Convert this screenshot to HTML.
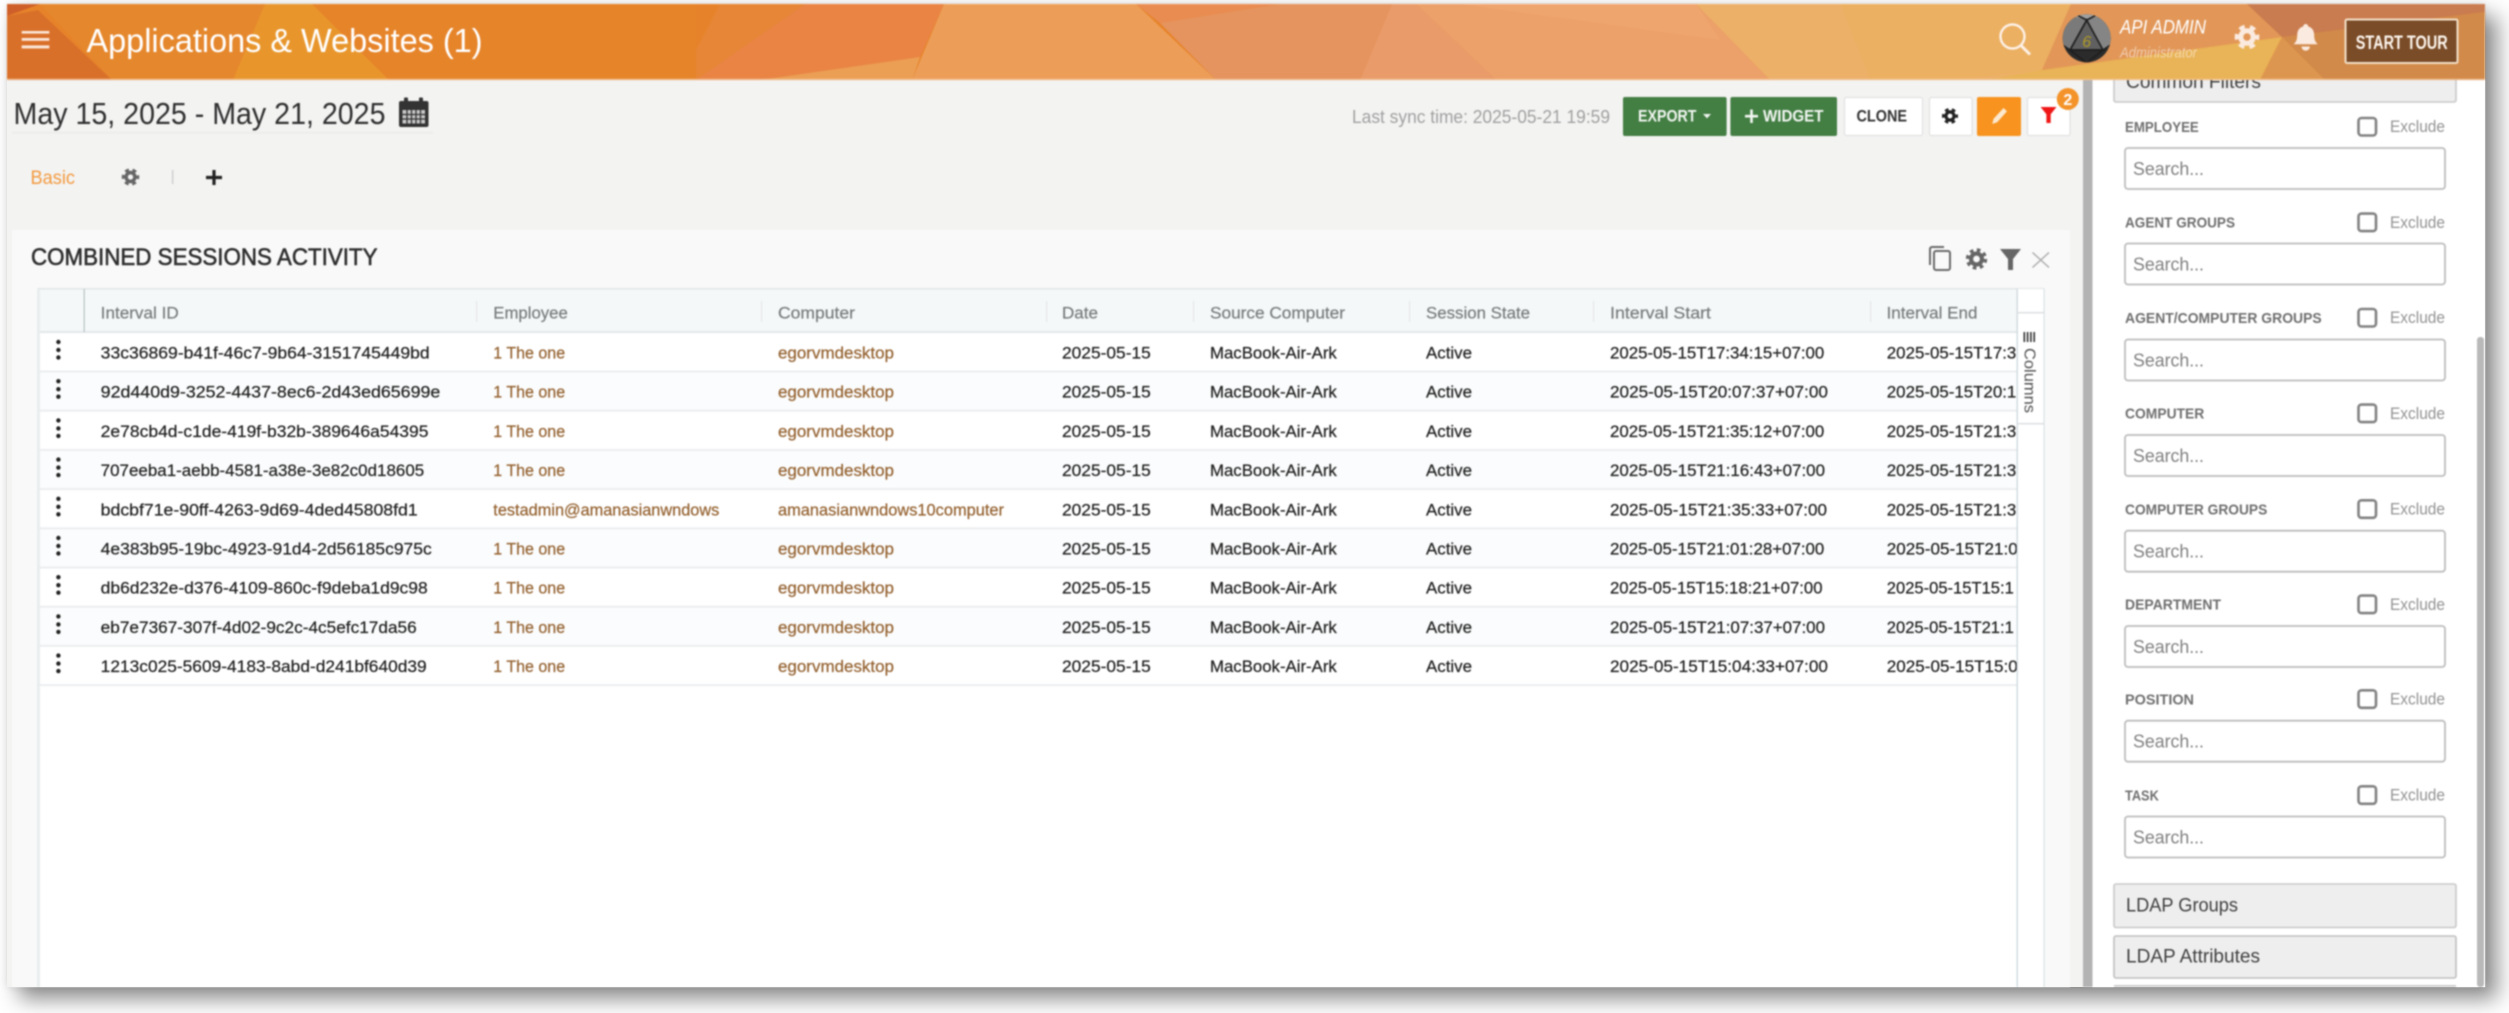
<!DOCTYPE html>
<html lang="en"><head><meta charset="utf-8"><title>Applications &amp; Websites</title>
<style>
html,body{margin:0;padding:0;background:#fff;width:2509px;height:1013px;overflow:hidden}
#p{position:absolute;left:7px;top:4px;width:2478px;height:983px;background:#f3f3f2;box-shadow:12px 12px 20px rgba(0,0,0,.45),0 0 8px rgba(0,0,0,.1)}
svg{position:absolute;left:0;top:0;filter:blur(.7px)}
text{font-family:"Liberation Sans",sans-serif}
.h{font-size:16.5px;fill:#777b7b;stroke:#777b7b;stroke-width:.2}
.c{font-size:16.5px;fill:#1f1f1f;stroke:#1f1f1f;stroke-width:.22}
.l{font-size:16.5px;fill:#93602e;stroke:#93602e;stroke-width:.2}
.sl{font-size:15px;font-weight:700;fill:#6f6f6f}
.ex{font-size:16.5px;fill:#939393}
.se{font-size:18.5px;fill:#808080}
.pn{font-size:19.5px;fill:#404040}
.in{fill:#fff;stroke:#bdbdbd;stroke-width:1.8}
.cb{fill:#fff;stroke:#828282;stroke-width:2.6}
</style></head><body>
<div id="p"></div>
<svg width="2509" height="1013" viewBox="0 0 2509 1013" xmlns="http://www.w3.org/2000/svg">
<defs>
<g id="k" fill="#222"><circle cx="58.4" cy="0" r="2.2"/><circle cx="58.4" cy="8" r="2.2"/><circle cx="58.4" cy="15.5" r="2.2"/></g>
<g id="g8"><circle r="8.5" fill="none" stroke="currentColor" stroke-width="3.4" stroke-dasharray="3.4 3.28"/><circle r="5.2" fill="none" stroke="currentColor" stroke-width="4"/></g>
<g id="g6"><circle r="8.5" fill="none" stroke="currentColor" stroke-width="3.6" stroke-dasharray="4.6 4.3" stroke-dashoffset="2.3"/><circle r="5.2" fill="none" stroke="currentColor" stroke-width="4.2"/></g>
<clipPath id="av"><circle cx="2086.7" cy="38.3" r="24"/></clipPath>
</defs>

<!-- main card -->
<rect x="12" y="230" width="2058" height="757" fill="#f9f9f9"/>
<rect x="12" y="132" width="421" height="1.6" fill="#ebebea"/>

<!-- date row -->
<text x="13.500" y="124" font-size="31" fill="#2f2f2f" textLength="372" lengthAdjust="spacingAndGlyphs">May 15, 2025 - May 21, 2025</text>
<g fill="#333"><rect x="399" y="101" width="29.5" height="26" rx="2"/><rect x="404" y="97.5" width="4" height="6" rx="1"/><rect x="419" y="97.5" width="4" height="6" rx="1"/></g>
<g fill="#c9c9c9"><rect x="402.5" y="110" width="22.5" height="13.5"/></g>
<g stroke="#333" stroke-width="1.3"><path d="M407 110v14M411.5 110v14M416 110v14M420.5 110v14M402 114.5h23M402 119h23"/></g>

<!-- tabs -->
<text x="30.500" y="184" font-size="19.500" fill="#f39a3f" textLength="44.500" lengthAdjust="spacingAndGlyphs">Basic</text>
<use href="#g6" transform="translate(130.5,177) scale(.85)" color="#666"/>
<rect x="172" y="170" width="1.4" height="14" fill="#ccc"/>
<path d="M214 170v15M206 177.5h16" stroke="#222" stroke-width="3.2" fill="none"/>

<!-- sync + buttons -->
<text x="1352" y="123" font-size="18" fill="#a0a0a0" textLength="258" lengthAdjust="spacingAndGlyphs">Last sync time: 2025-05-21 19:59</text>
<rect x="1623" y="97" width="103.6" height="39" rx="2" fill="#437e43"/>
<text x="1638" y="121.7" font-size="17" font-weight="700" fill="#f2f6f2" textLength="58.5" lengthAdjust="spacingAndGlyphs">EXPORT</text>
<path d="M1703 114h8l-4 4.4z" fill="#f2f6f2"/>
<rect x="1730.4" y="97" width="106.6" height="39" rx="2" fill="#437e43"/>
<path d="M1751.5 109.5v13.5M1745 116.2h13" stroke="#f2f6f2" stroke-width="2.6"/>
<text x="1763" y="121.7" font-size="17" font-weight="700" fill="#f2f6f2" textLength="60.5" lengthAdjust="spacingAndGlyphs">WIDGET</text>
<rect x="1844.5" y="97.5" width="78" height="38" rx="2" fill="#fff" stroke="#dcdcdc"/>
<text x="1856.5" y="121.7" font-size="17" font-weight="700" fill="#333" textLength="50.5" lengthAdjust="spacingAndGlyphs">CLONE</text>
<rect x="1929.5" y="97.5" width="42.5" height="38" rx="2" fill="#fff" stroke="#dcdcdc"/>
<use href="#g6" transform="translate(1950,116) scale(.78)" color="#222"/>
<rect x="1977" y="97" width="44" height="39" rx="2" fill="#f7931e"/>
<path d="M2003.5 108l3.5 3.2-9.8 11-5 1.8 1.4-5.2z" fill="#fde9cf"/>
<rect x="2027.5" y="97.5" width="42.5" height="38" rx="2" fill="#fff" stroke="#dcdcdc"/>
<path d="M2040.6 107h15.9l-5.8 7.2v8.8h-4.3v-8.8z" fill="#f01616"/>
<circle cx="2067.8" cy="99" r="11" fill="#f4932a"/>
<text x="2067.8" y="105" font-size="16" font-weight="700" fill="#fff" text-anchor="middle">2</text>

<!-- card title -->
<text x="31" y="265" font-size="24" fill="#2f2f2f" stroke="#2f2f2f" stroke-width=".6" textLength="346.500" lengthAdjust="spacingAndGlyphs">COMBINED SESSIONS ACTIVITY</text>
<g fill="none" stroke="#6a6a6a" stroke-width="2"><rect x="1934" y="251" width="16" height="19" rx="2"/><path d="M1930 265v-16a2 2 0 0 1 2-2h12"/></g>
<use href="#g8" transform="translate(1976.5,259) scale(1.05)" color="#666"/>
<path d="M2000 249h21l-8 10v11h-5v-11z" fill="#666"/>
<path d="M2032.5 252.5l16.5 15M2049 252.5l-16.5 15" stroke="#adadad" stroke-width="1.5"/>

<!-- table -->
<rect x="38.5" y="289" width="2005.5" height="698" fill="#fff"/>
<rect x="37" y="288" width="3" height="699" fill="#e9eded"/>
<rect x="38.5" y="288" width="2006" height="1.6" fill="#e2e6e7"/>
<rect x="40" y="289.5" width="1977" height="42.5" fill="#f5f8f8"/>
<rect x="40" y="331" width="1977" height="2" fill="#e3e7e9"/>
<rect x="83.6" y="289" width="1.2" height="43" fill="#b6c0c2"/>
<g fill="#e4e7e8"><rect x="476" y="301" width="1.2" height="21"/><rect x="761" y="301" width="1.2" height="21"/><rect x="1046" y="301" width="1.2" height="21"/><rect x="1193" y="301" width="1.2" height="21"/><rect x="1409" y="301" width="1.2" height="21"/><rect x="1593" y="301" width="1.2" height="21"/><rect x="1870" y="301" width="1.2" height="21"/></g>
<g fill="#fbfcfd"><rect x="40" y="372" width="1977" height="38"/><rect x="40" y="450.4" width="1977" height="38"/><rect x="40" y="528.8" width="1977" height="38"/><rect x="40" y="607.2" width="1977" height="38"/></g>
<g fill="#e9ecee"><rect x="40" y="370.6" width="1977" height="1.8"/><rect x="40" y="409.8" width="1977" height="1.8"/><rect x="40" y="449" width="1977" height="1.8"/><rect x="40" y="488.2" width="1977" height="1.8"/><rect x="40" y="527.4" width="1977" height="1.8"/><rect x="40" y="566.6" width="1977" height="1.8"/><rect x="40" y="605.8" width="1977" height="1.8"/><rect x="40" y="645" width="1977" height="1.8"/><rect x="40" y="684.2" width="1977" height="1.8"/></g>

<g class="hd">
<text class="h" x="100.7" y="318.5" textLength="78" lengthAdjust="spacingAndGlyphs">Interval ID</text>
<text class="h" x="493.3" y="318.5" textLength="74.5" lengthAdjust="spacingAndGlyphs">Employee</text>
<text class="h" x="778" y="318.5" textLength="77" lengthAdjust="spacingAndGlyphs">Computer</text>
<text class="h" x="1062" y="318.5" textLength="36" lengthAdjust="spacingAndGlyphs">Date</text>
<text class="h" x="1210" y="318.5" textLength="135" lengthAdjust="spacingAndGlyphs">Source Computer</text>
<text class="h" x="1426" y="318.5" textLength="104" lengthAdjust="spacingAndGlyphs">Session State</text>
<text class="h" x="1610" y="318.5" textLength="101" lengthAdjust="spacingAndGlyphs">Interval Start</text>
<text class="h" x="1886.5" y="318.5" textLength="91" lengthAdjust="spacingAndGlyphs">Interval End</text>
</g>

<use href="#k" y="342"/><use href="#k" y="381.2"/><use href="#k" y="420.4"/><use href="#k" y="459.6"/><use href="#k" y="498.8"/><use href="#k" y="538"/><use href="#k" y="577.2"/><use href="#k" y="616.4"/><use href="#k" y="655.6"/>

<!-- row 1 -->
<text class="c" x="100.7" y="358.5" textLength="329" lengthAdjust="spacingAndGlyphs">33c36869-b41f-46c7-9b64-3151745449bd</text>
<text class="l" x="493.3" y="358.5" textLength="71.8" lengthAdjust="spacingAndGlyphs">1 The one</text>
<text class="l" x="778" y="358.5" textLength="116" lengthAdjust="spacingAndGlyphs">egorvmdesktop</text>
<text class="c" x="1062" y="358.5" textLength="88.8" lengthAdjust="spacingAndGlyphs">2025-05-15</text>
<text class="c" x="1210" y="358.5" textLength="126.8" lengthAdjust="spacingAndGlyphs">MacBook-Air-Ark</text>
<text class="c" x="1426" y="358.5" textLength="46" lengthAdjust="spacingAndGlyphs">Active</text>
<text class="c" x="1610" y="358.5" textLength="214.3" lengthAdjust="spacingAndGlyphs">2025-05-15T17:34:15+07:00</text>
<text class="c" x="1886.8" y="358.5" textLength="129.5" lengthAdjust="spacingAndGlyphs">2025-05-15T17:3</text>
<!-- row 2 -->
<text class="c" x="100.7" y="397.7" textLength="339.6" lengthAdjust="spacingAndGlyphs">92d440d9-3252-4437-8ec6-2d43ed65699e</text>
<text class="l" x="493.3" y="397.7" textLength="71.8" lengthAdjust="spacingAndGlyphs">1 The one</text>
<text class="l" x="778" y="397.7" textLength="116" lengthAdjust="spacingAndGlyphs">egorvmdesktop</text>
<text class="c" x="1062" y="397.7" textLength="88.8" lengthAdjust="spacingAndGlyphs">2025-05-15</text>
<text class="c" x="1210" y="397.7" textLength="126.8" lengthAdjust="spacingAndGlyphs">MacBook-Air-Ark</text>
<text class="c" x="1426" y="397.7" textLength="46" lengthAdjust="spacingAndGlyphs">Active</text>
<text class="c" x="1610" y="397.7" textLength="217.9" lengthAdjust="spacingAndGlyphs">2025-05-15T20:07:37+07:00</text>
<text class="c" x="1886.8" y="397.7" textLength="129.5" lengthAdjust="spacingAndGlyphs">2025-05-15T20:1</text>
<!-- row 3 -->
<text class="c" x="100.7" y="436.9" textLength="327.8" lengthAdjust="spacingAndGlyphs">2e78cb4d-c1de-419f-b32b-389646a54395</text>
<text class="l" x="493.3" y="436.9" textLength="71.8" lengthAdjust="spacingAndGlyphs">1 The one</text>
<text class="l" x="778" y="436.9" textLength="116" lengthAdjust="spacingAndGlyphs">egorvmdesktop</text>
<text class="c" x="1062" y="436.9" textLength="88.8" lengthAdjust="spacingAndGlyphs">2025-05-15</text>
<text class="c" x="1210" y="436.9" textLength="126.8" lengthAdjust="spacingAndGlyphs">MacBook-Air-Ark</text>
<text class="c" x="1426" y="436.9" textLength="46" lengthAdjust="spacingAndGlyphs">Active</text>
<text class="c" x="1610" y="436.9" textLength="214.3" lengthAdjust="spacingAndGlyphs">2025-05-15T21:35:12+07:00</text>
<text class="c" x="1886.8" y="436.9" textLength="129.5" lengthAdjust="spacingAndGlyphs">2025-05-15T21:3</text>
<!-- row 4 -->
<text class="c" x="100.7" y="476.1" textLength="323.5" lengthAdjust="spacingAndGlyphs">707eeba1-aebb-4581-a38e-3e82c0d18605</text>
<text class="l" x="493.3" y="476.1" textLength="71.8" lengthAdjust="spacingAndGlyphs">1 The one</text>
<text class="l" x="778" y="476.1" textLength="116" lengthAdjust="spacingAndGlyphs">egorvmdesktop</text>
<text class="c" x="1062" y="476.1" textLength="88.8" lengthAdjust="spacingAndGlyphs">2025-05-15</text>
<text class="c" x="1210" y="476.1" textLength="126.8" lengthAdjust="spacingAndGlyphs">MacBook-Air-Ark</text>
<text class="c" x="1426" y="476.1" textLength="46" lengthAdjust="spacingAndGlyphs">Active</text>
<text class="c" x="1610" y="476.1" textLength="215" lengthAdjust="spacingAndGlyphs">2025-05-15T21:16:43+07:00</text>
<text class="c" x="1886.8" y="476.1" textLength="129.5" lengthAdjust="spacingAndGlyphs">2025-05-15T21:3</text>
<!-- row 5 -->
<text class="c" x="100.7" y="515.3" textLength="317" lengthAdjust="spacingAndGlyphs">bdcbf71e-90ff-4263-9d69-4ded45808fd1</text>
<text class="l" x="493.3" y="515.3" textLength="226" lengthAdjust="spacingAndGlyphs">testadmin@amanasianwndows</text>
<text class="l" x="778" y="515.3" textLength="226" lengthAdjust="spacingAndGlyphs">amanasianwndows10computer</text>
<text class="c" x="1062" y="515.3" textLength="88.8" lengthAdjust="spacingAndGlyphs">2025-05-15</text>
<text class="c" x="1210" y="515.3" textLength="126.8" lengthAdjust="spacingAndGlyphs">MacBook-Air-Ark</text>
<text class="c" x="1426" y="515.3" textLength="46" lengthAdjust="spacingAndGlyphs">Active</text>
<text class="c" x="1610" y="515.3" textLength="217" lengthAdjust="spacingAndGlyphs">2025-05-15T21:35:33+07:00</text>
<text class="c" x="1886.8" y="515.3" textLength="129.5" lengthAdjust="spacingAndGlyphs">2025-05-15T21:3</text>
<!-- row 6 -->
<text class="c" x="100.7" y="554.5" textLength="331" lengthAdjust="spacingAndGlyphs">4e383b95-19bc-4923-91d4-2d56185c975c</text>
<text class="l" x="493.3" y="554.5" textLength="71.8" lengthAdjust="spacingAndGlyphs">1 The one</text>
<text class="l" x="778" y="554.5" textLength="116" lengthAdjust="spacingAndGlyphs">egorvmdesktop</text>
<text class="c" x="1062" y="554.5" textLength="88.8" lengthAdjust="spacingAndGlyphs">2025-05-15</text>
<text class="c" x="1210" y="554.5" textLength="126.8" lengthAdjust="spacingAndGlyphs">MacBook-Air-Ark</text>
<text class="c" x="1426" y="554.5" textLength="46" lengthAdjust="spacingAndGlyphs">Active</text>
<text class="c" x="1610" y="554.5" textLength="214.3" lengthAdjust="spacingAndGlyphs">2025-05-15T21:01:28+07:00</text>
<text class="c" x="1886.8" y="554.5" textLength="131" lengthAdjust="spacingAndGlyphs">2025-05-15T21:0</text>
<!-- row 7 -->
<text class="c" x="100.7" y="593.7" textLength="327" lengthAdjust="spacingAndGlyphs">db6d232e-d376-4109-860c-f9deba1d9c98</text>
<text class="l" x="493.3" y="593.7" textLength="71.8" lengthAdjust="spacingAndGlyphs">1 The one</text>
<text class="l" x="778" y="593.7" textLength="116" lengthAdjust="spacingAndGlyphs">egorvmdesktop</text>
<text class="c" x="1062" y="593.7" textLength="88.8" lengthAdjust="spacingAndGlyphs">2025-05-15</text>
<text class="c" x="1210" y="593.7" textLength="126.8" lengthAdjust="spacingAndGlyphs">MacBook-Air-Ark</text>
<text class="c" x="1426" y="593.7" textLength="46" lengthAdjust="spacingAndGlyphs">Active</text>
<text class="c" x="1610" y="593.7" textLength="212.5" lengthAdjust="spacingAndGlyphs">2025-05-15T15:18:21+07:00</text>
<text class="c" x="1886.8" y="593.7" textLength="127" lengthAdjust="spacingAndGlyphs">2025-05-15T15:1</text>
<!-- row 8 -->
<text class="c" x="100.7" y="632.9" textLength="316" lengthAdjust="spacingAndGlyphs">eb7e7367-307f-4d02-9c2c-4c5efc17da56</text>
<text class="l" x="493.3" y="632.9" textLength="71.8" lengthAdjust="spacingAndGlyphs">1 The one</text>
<text class="l" x="778" y="632.9" textLength="116" lengthAdjust="spacingAndGlyphs">egorvmdesktop</text>
<text class="c" x="1062" y="632.9" textLength="88.8" lengthAdjust="spacingAndGlyphs">2025-05-15</text>
<text class="c" x="1210" y="632.9" textLength="126.8" lengthAdjust="spacingAndGlyphs">MacBook-Air-Ark</text>
<text class="c" x="1426" y="632.9" textLength="46" lengthAdjust="spacingAndGlyphs">Active</text>
<text class="c" x="1610" y="632.9" textLength="215" lengthAdjust="spacingAndGlyphs">2025-05-15T21:07:37+07:00</text>
<text class="c" x="1886.8" y="632.9" textLength="127" lengthAdjust="spacingAndGlyphs">2025-05-15T21:1</text>
<!-- row 9 -->
<text class="c" x="100.7" y="672.1" textLength="326" lengthAdjust="spacingAndGlyphs">1213c025-5609-4183-8abd-d241bf640d39</text>
<text class="l" x="493.3" y="672.1" textLength="71.8" lengthAdjust="spacingAndGlyphs">1 The one</text>
<text class="l" x="778" y="672.1" textLength="116" lengthAdjust="spacingAndGlyphs">egorvmdesktop</text>
<text class="c" x="1062" y="672.1" textLength="88.8" lengthAdjust="spacingAndGlyphs">2025-05-15</text>
<text class="c" x="1210" y="672.1" textLength="126.8" lengthAdjust="spacingAndGlyphs">MacBook-Air-Ark</text>
<text class="c" x="1426" y="672.1" textLength="46" lengthAdjust="spacingAndGlyphs">Active</text>
<text class="c" x="1610" y="672.1" textLength="217.9" lengthAdjust="spacingAndGlyphs">2025-05-15T15:04:33+07:00</text>
<text class="c" x="1886.8" y="672.1" textLength="131" lengthAdjust="spacingAndGlyphs">2025-05-15T15:0</text>

<!-- columns side -->
<rect x="2017" y="289" width="27" height="698" fill="#fff"/>
<rect x="2016.6" y="289" width="1.2" height="698" fill="#c9d4da"/>
<rect x="2043.4" y="289" width="1.4" height="698" fill="#dfe4e6"/>
<rect x="2017" y="312" width="27" height="1.4" fill="#d9dee0"/>
<rect x="2017" y="423" width="27" height="1.4" fill="#d9dee0"/>
<g fill="#333"><rect x="2023.5" y="332" width="1.6" height="10"/><rect x="2026.8" y="332" width="1.6" height="10"/><rect x="2030.1" y="332" width="1.6" height="10"/><rect x="2033.4" y="332" width="1.6" height="10"/></g>
<text transform="translate(2024.5,348) rotate(90)" font-size="16" fill="#505050" textLength="65" lengthAdjust="spacingAndGlyphs">Columns</text>

<!-- sidebar -->
<rect x="2083" y="80" width="9.5" height="907" fill="#b3b3b3"/>
<rect x="2092.5" y="80" width="392.5" height="907" fill="#fff"/>
<rect x="2477" y="337" width="7" height="650" rx="3" fill="#b9b9b9"/>

<rect x="2114" y="70" width="342" height="32" rx="2" fill="#eee" stroke="#c8c8c8" stroke-width="1.6"/>
<text class="pn" x="2126" y="88" textLength="135" lengthAdjust="spacingAndGlyphs">Common Filters</text>

<text class="sl" x="2125" y="132" textLength="73.8" lengthAdjust="spacingAndGlyphs">EMPLOYEE</text>
<rect class="cb" x="2358.5" y="118" width="17.5" height="17.5" rx="3"/>
<text class="ex" x="2390" y="132.2" textLength="55" lengthAdjust="spacingAndGlyphs">Exclude</text>
<rect class="in" x="2125" y="148" width="320" height="41" rx="3"/>
<text class="se" x="2133" y="175" textLength="71" lengthAdjust="spacingAndGlyphs">Search...</text>

<text class="sl" x="2125" y="227.6" textLength="110" lengthAdjust="spacingAndGlyphs">AGENT GROUPS</text>
<rect class="cb" x="2358.5" y="213.6" width="17.5" height="17.5" rx="3"/>
<text class="ex" x="2390" y="227.8" textLength="55" lengthAdjust="spacingAndGlyphs">Exclude</text>
<rect class="in" x="2125" y="243.5" width="320" height="41" rx="3"/>
<text class="se" x="2133" y="270.5" textLength="71" lengthAdjust="spacingAndGlyphs">Search...</text>

<text class="sl" x="2125" y="323" textLength="196.7" lengthAdjust="spacingAndGlyphs">AGENT/COMPUTER GROUPS</text>
<rect class="cb" x="2358.5" y="309" width="17.5" height="17.5" rx="3"/>
<text class="ex" x="2390" y="323.2" textLength="55" lengthAdjust="spacingAndGlyphs">Exclude</text>
<rect class="in" x="2125" y="339.5" width="320" height="41" rx="3"/>
<text class="se" x="2133" y="366.5" textLength="71" lengthAdjust="spacingAndGlyphs">Search...</text>

<text class="sl" x="2125" y="418.6" textLength="79.3" lengthAdjust="spacingAndGlyphs">COMPUTER</text>
<rect class="cb" x="2358.5" y="404.6" width="17.5" height="17.5" rx="3"/>
<text class="ex" x="2390" y="418.8" textLength="55" lengthAdjust="spacingAndGlyphs">Exclude</text>
<rect class="in" x="2125" y="435" width="320" height="41" rx="3"/>
<text class="se" x="2133" y="462" textLength="71" lengthAdjust="spacingAndGlyphs">Search...</text>

<text class="sl" x="2125" y="514.3" textLength="142.3" lengthAdjust="spacingAndGlyphs">COMPUTER GROUPS</text>
<rect class="cb" x="2358.5" y="500.3" width="17.5" height="17.5" rx="3"/>
<text class="ex" x="2390" y="514.5" textLength="55" lengthAdjust="spacingAndGlyphs">Exclude</text>
<rect class="in" x="2125" y="530.7" width="320" height="41" rx="3"/>
<text class="se" x="2133" y="557.7" textLength="71" lengthAdjust="spacingAndGlyphs">Search...</text>

<text class="sl" x="2125" y="609.6" textLength="96" lengthAdjust="spacingAndGlyphs">DEPARTMENT</text>
<rect class="cb" x="2358.5" y="595.6" width="17.5" height="17.5" rx="3"/>
<text class="ex" x="2390" y="609.8" textLength="55" lengthAdjust="spacingAndGlyphs">Exclude</text>
<rect class="in" x="2125" y="626" width="320" height="41" rx="3"/>
<text class="se" x="2133" y="653" textLength="71" lengthAdjust="spacingAndGlyphs">Search...</text>

<text class="sl" x="2125" y="704.3" textLength="69" lengthAdjust="spacingAndGlyphs">POSITION</text>
<rect class="cb" x="2358.5" y="690.3" width="17.5" height="17.5" rx="3"/>
<text class="ex" x="2390" y="704.5" textLength="55" lengthAdjust="spacingAndGlyphs">Exclude</text>
<rect class="in" x="2125" y="720.7" width="320" height="41" rx="3"/>
<text class="se" x="2133" y="747.7" textLength="71" lengthAdjust="spacingAndGlyphs">Search...</text>

<text class="sl" x="2125" y="800.3" textLength="33.8" lengthAdjust="spacingAndGlyphs">TASK</text>
<rect class="cb" x="2358.5" y="786.3" width="17.5" height="17.5" rx="3"/>
<text class="ex" x="2390" y="800.5" textLength="55" lengthAdjust="spacingAndGlyphs">Exclude</text>
<rect class="in" x="2125" y="816.5" width="320" height="41" rx="3"/>
<text class="se" x="2133" y="843.5" textLength="71" lengthAdjust="spacingAndGlyphs">Search...</text>

<rect x="2114" y="884" width="342" height="43.5" rx="2" fill="#eee" stroke="#c8c8c8" stroke-width="1.6"/>
<text class="pn" x="2126" y="911.7" textLength="112" lengthAdjust="spacingAndGlyphs">LDAP Groups</text>
<rect x="2114" y="936" width="342" height="42" rx="2" fill="#eee" stroke="#bfbfbf" stroke-width="1.6"/>
<text class="pn" x="2126" y="962.7" textLength="134" lengthAdjust="spacingAndGlyphs">LDAP Attributes</text>
<rect x="2114" y="985" width="342" height="2" fill="#ccc"/>

<!-- header -->
<rect x="7" y="4" width="2478" height="76" fill="#e6832a"/>
<polygon points="7,4 40,4 7,16" fill="#cf5f2a"/>
<polygon points="7,16 38,10 112,80 7,80" fill="#d9702a"/>
<polygon points="40,4 265,4 233,80 112,80" fill="#e5872c"/>
<polygon points="265,4 312,4 389,80 233,80" fill="#e8962c"/>
<polygon points="312,4 696,4 696,80 389,80" fill="#e6842a"/>
<polygon points="720,4 805,4 696,80 696,50" fill="#e68636"/>
<polygon points="805,4 944,4 920,57 760,80 696,80" fill="#e98445"/>
<polygon points="760,80 920,57 912,80" fill="#eb9f55"/>
<polygon points="944,4 1136,4 1216,80 912,80" fill="#ec9e58"/>
<polygon points="1136,4 1280,4 1160,23" fill="#e98c52"/>
<polygon points="1160,23 1280,4 1392,4 1360,80 1216,80" fill="#e5945f"/>
<polygon points="1392,4 1416,4 1496,80 1360,80" fill="#e99b6a"/>
<polygon points="1416,4 1696,4 1770,80 1496,80" fill="#eca06a"/>
<polygon points="1460,4 1696,4 1720,40" fill="#efa56e"/>
<polygon points="1696,4 2071,4 2042,70 2000,80 1770,80" fill="#ecb069"/>
<polygon points="1840,4 2071,4 2042,70 1960,80 1870,80" fill="#ebb062"/>
<polygon points="2071,4 2247,4 2282,37 2042,70" fill="#e29758"/>
<polygon points="2042,70 2282,37 2260,80 1985,80" fill="#e9b357"/>
<polygon points="2247,4 2485,4 2485,12 2282,37" fill="#c97c50"/>
<polygon points="2282,37 2325,80 2260,80" fill="#dd9650"/>
<polygon points="2282,37 2485,12 2485,80 2325,80" fill="#d28a4a"/>
<rect x="7" y="78.6" width="2478" height="1.6" fill="#f4c59a" opacity=".7"/>

<g fill="#fbe6d8"><rect x="21.7" y="31" width="27.6" height="2.6"/><rect x="21.7" y="38" width="27.6" height="2.8"/><rect x="21.7" y="45.4" width="27.6" height="3"/></g>
<text x="86.5" y="52" font-size="33" fill="#fff" textLength="396" lengthAdjust="spacingAndGlyphs">Applications &amp; Websites (1)</text>

<circle cx="2012.5" cy="36.5" r="12" fill="none" stroke="#fdf0e6" stroke-width="2.4"/>
<path d="M2021 45.5l9 9" stroke="#fdf0e6" stroke-width="3"/>

<circle cx="2086.7" cy="38.3" r="24" fill="#2b2b2b"/>
<g clip-path="url(#av)">
<polygon points="2062,14 2111,14 2086.7,20" fill="#a0a0a0"/>
<polygon points="2062,14 2086.7,20 2070,50 2060,46" fill="#7a7a7a"/>
<polygon points="2111,14 2086.7,20 2103,50 2113,46" fill="#858585"/>
<polygon points="2086.7,22 2071.5,49 2102,49" fill="#606060"/>
<path d="M2086.7 20l-16.7 30h33zM2070 50l-9-6M2103 50l9-6M2070 50l16.7 13 16.3-13M2086.7 20l-14-7M2086.7 20l14-7" fill="none" stroke="#1e1e1e" stroke-width="1.6"/>
</g>
<text x="2086.7" y="47" font-size="16" font-style="italic" fill="#b09a24" text-anchor="middle">6</text>

<text x="2120" y="33.3" font-size="19" font-style="italic" fill="#fff" textLength="86" lengthAdjust="spacingAndGlyphs">API ADMIN</text>
<text x="2120" y="57.3" font-size="15" font-style="italic" fill="#fff" fill-opacity=".5" textLength="77" lengthAdjust="spacingAndGlyphs">Administrator</text>

<use href="#g6" transform="translate(2247,37) scale(1.2)" color="#fbeadf"/>
<path d="M2305.7 24a2.5 2.5 0 0 1 2.5 2.5c4.4 1.2 6 4.6 6 9 0 4.8 1.6 6.8 3.5 8.8h-24c1.9-2 3.5-4 3.5-8.8 0-4.4 1.6-7.8 6-9a2.5 2.5 0 0 1 2.5-2.5z" fill="#fbeadf"/>
<path d="M2301.5 46.5h8.4a4.2 4.2 0 0 1-8.4 0z" fill="#fbeadf"/>

<rect x="2345.5" y="19.5" width="112" height="43.5" rx="1.5" fill="#7a4c28" stroke="#f3dfc7" stroke-width="2"/>
<text x="2355.7" y="49" font-size="19" font-weight="700" fill="#fdf6ee" textLength="92" lengthAdjust="spacingAndGlyphs">START TOUR</text>
</svg>
</body></html>
